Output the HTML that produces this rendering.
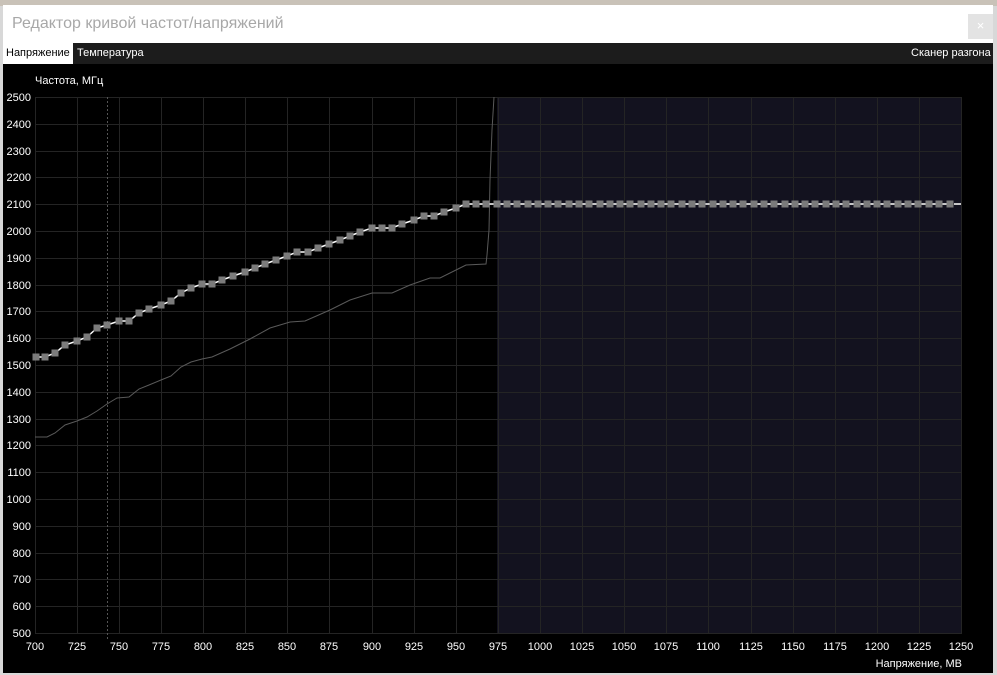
<!DOCTYPE html>
<html><head><meta charset="utf-8"><style>
html,body{margin:0;padding:0;width:997px;height:675px;overflow:hidden;background:#d8d8d8;font-family:"Liberation Sans","Noto Sans CJK SC",sans-serif;}
#bgtop{position:absolute;left:0;top:0;width:997px;height:6px;background:#c9c2b8;}
#win{position:absolute;left:3px;top:5px;width:990px;height:668px;background:#000;}
#title{position:absolute;left:0;top:0;width:990px;height:38px;background:#fff;}
#title span{position:absolute;left:9px;top:10px;font-size:16px;color:#a8a8a8;}
#close{position:absolute;left:965px;top:9px;width:25px;height:25px;background:#e3e3e3;color:#fff;font-size:13px;text-align:center;line-height:24px;}
#tabs{position:absolute;left:0;top:38px;width:990px;height:21px;background:#1c1c1c;font-size:11px;}
.tab{position:absolute;top:4px;color:#fff;}
#t1{left:0;top:0;height:21px;width:70px;background:#fff;color:#000;}
#t1 span{position:absolute;left:3px;top:4px;}
svg{position:absolute;left:0;top:0;}
svg text{font-family:"Liberation Sans",sans-serif;font-size:11px;fill:#fff;}
</style></head><body>
<div id="bgtop"></div>
<div id="win">
<div id="title"><span>Редактор кривой частот/напряжений</span><div id="close">×</div></div>
<div id="tabs"><div class="tab" id="t1"><span>Напряжение</span></div><div class="tab" style="left:74px">Температура</div><div class="tab" style="left:908px">Сканер разгона</div></div>
</div>
<svg width="997" height="675" viewBox="0 0 997 675">
<defs><marker id="sq" markerWidth="8" markerHeight="8" refX="4" refY="4" markerUnits="userSpaceOnUse"><rect x="0.5" y="0.5" width="7" height="7" fill="#7b7b7b"/></marker></defs>
<rect x="497" y="97" width="465" height="536" fill="#13121f"/>
<g stroke="#242424" stroke-width="1">
<path d="M35 97.5H962M35 124.5H962M35 151.5H962M35 177.5H962M35 204.5H962M35 231.5H962M35 258.5H962M35 285.5H962M35 311.5H962M35 338.5H962M35 365.5H962M35 392.5H962M35 419.5H962M35 445.5H962M35 472.5H962M35 499.5H962M35 526.5H962M35 553.5H962M35 579.5H962M35 606.5H962M35 633.5H962"/>
<path d="M35.5 97V633M77.5 97V633M119.5 97V633M161.5 97V633M203.5 97V633M245.5 97V633M287.5 97V633M329.5 97V633M372.5 97V633M414.5 97V633M456.5 97V633M498.5 97V633M540.5 97V633M582.5 97V633M624.5 97V633M666.5 97V633M708.5 97V633M751.5 97V633M793.5 97V633M835.5 97V633M877.5 97V633M919.5 97V633M961.5 97V633"/>
</g>
<path d="M107.5 97V640" stroke="#555" stroke-dasharray="2,2"/>
<polyline fill="none" stroke="#5a5a5a" stroke-width="1" points="35,437 47,437 55,433 65,425 77,421 87,417 97,411 107,404 117,398 129,397 139,389 149,385 161,380 171,376 181,367 191,362 202,359 212,357 230,349 250,339 270,328 290,322 305,321 330,310 350,300 372,293 392,293 410,285 430,278 440,278 460,268 466,265 486,264 487,255 489,230 490,180 492,130 494,97"/>
<polyline fill="none" stroke="#fff" stroke-width="1.5" marker-start="url(#sq)" marker-mid="url(#sq)" marker-end="url(#sq)" points="36,357 45,357 55,353 65,345 77,341 87,337 97,328 107,325 119,321 129,321 139,313 149,309 161,305 171,301 181,293 191,288 202,284 212,284 222,280 233,276 245,272 255,268 265,264 276,260 287,256 297,252 308,252 318,248 329,244 340,240 350,236 360,232 372,228 382,228 392,228 402,224 414,220 424,216 434,216 444,212 456,208 466,204 476,204 486,204 497,204 507,204 517,204 528,204 538,204 548,204 558,204 569,204 579,204 589,204 600,204 610,204 620,204 630,204 641,204 651,204 661,204 671,204 682,204 692,204 702,204 713,204 723,204 733,204 743,204 754,204 764,204 774,204 785,204 795,204 805,204 815,204 826,204 836,204 846,204 857,204 867,204 877,204 887,204 898,204 908,204 918,204 929,204 939,204 950,204"/>
<path d="M954 204H961" stroke="#fff" stroke-width="1.5"/>
<text x="35" y="84" fill="#f4f0dc">Частота, МГц</text>
<g text-anchor="end">
<text x="31" y="101">2500</text><text x="31" y="128">2400</text><text x="31" y="155">2300</text><text x="31" y="181">2200</text><text x="31" y="208">2100</text><text x="31" y="235">2000</text><text x="31" y="262">1900</text><text x="31" y="289">1800</text><text x="31" y="315">1700</text><text x="31" y="342">1600</text><text x="31" y="369">1500</text><text x="31" y="396">1400</text><text x="31" y="423">1300</text><text x="31" y="449">1200</text><text x="31" y="476">1100</text><text x="31" y="503">1000</text><text x="31" y="530">900</text><text x="31" y="557">800</text><text x="31" y="583">700</text><text x="31" y="610">600</text><text x="31" y="637">500</text>
</g>
<g text-anchor="middle">
<text x="35" y="650">700</text><text x="77" y="650">725</text><text x="119" y="650">750</text><text x="161" y="650">775</text><text x="203" y="650">800</text><text x="245" y="650">825</text><text x="287" y="650">850</text><text x="329" y="650">875</text><text x="372" y="650">900</text><text x="414" y="650">925</text><text x="456" y="650">950</text><text x="498" y="650">975</text><text x="540" y="650">1000</text><text x="582" y="650">1025</text><text x="624" y="650">1050</text><text x="666" y="650">1075</text><text x="708" y="650">1100</text><text x="751" y="650">1125</text><text x="793" y="650">1150</text><text x="835" y="650">1175</text><text x="877" y="650">1200</text><text x="919" y="650">1225</text><text x="961" y="650">1250</text>
</g>
<text x="962" y="667" text-anchor="end">Напряжение, МВ</text>
</svg>
</body></html>
